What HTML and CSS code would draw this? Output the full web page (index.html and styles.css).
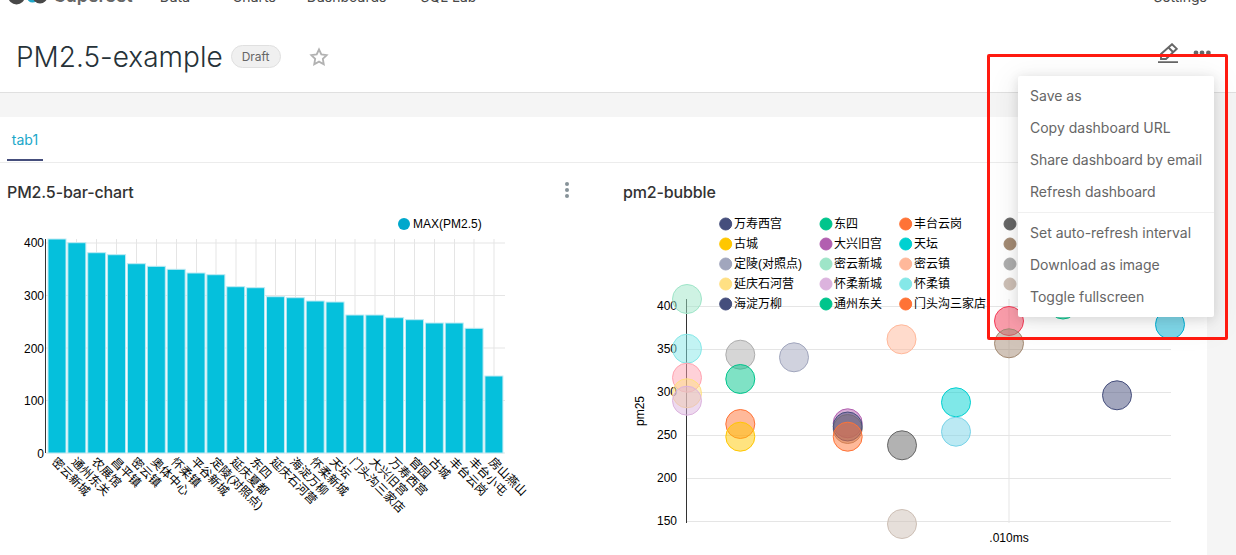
FILE: index.html
```html
<!DOCTYPE html>
<html lang="en">
<head>
  <meta charset="UTF-8">
  <meta name="viewport" content="width=device-width, initial-scale=1.0">
  <title>PM2.5-example</title>
  <link rel="stylesheet" href="styles.css">
</head>
<body>
  <nav class="top-nav">
    <svg class="logo" viewBox="0 0 39 6" width="39" height="6">
      <circle class="logo-dark" cx="8.5" cy="-4" r="8.5"/>
      <circle class="logo-teal" cx="24.5" cy="-3" r="5.5"/>
      <circle class="logo-dark" cx="32" cy="-4" r="7.5"/>
    </svg>
    <span class="brand">Superset</span>
    <div class="nav-links">
      <a class="nav-link nav-link-first">Data</a>
      <a class="nav-link nav-link-charts">Charts</a>
      <a class="nav-link">Dashboards</a>
      <a class="nav-link">SQL Lab</a>
    </div>
    <div class="nav-right">
      <svg class="nav-plus" viewBox="0 0 4 2" width="4" height="2"><rect class="logo-teal" x="1" y="0" width="2" height="2"/></svg>
      <a class="nav-link">Settings</a>
    </div>
  </nav>

  <header class="dash-header">
    <div class="title-group">
      <h1 class="dash-title">PM2.5-example</h1>
      <span class="draft-badge">Draft</span>
      <svg class="star" viewBox="0 0 24 24" width="20" height="20">
        <polygon points="12 3 14.8 8.9 21.2 9.8 16.6 14.3 17.7 20.7 12 17.6 6.3 20.7 7.4 14.3 2.8 9.8 9.2 8.9"/>
      </svg>
    </div>
    <div class="actions">
      <svg class="pencil" viewBox="0 0 20 20" width="20" height="20">
        <path d="M14 1.2 L18.8 5.8 L8 16 H3 V11 Z"/>
        <path d="M10.5 4.5 L15 9"/>
        <path d="M0 19.2 H20"/>
      </svg>
      <svg class="more" viewBox="0 0 18 6" width="18" height="6">
        <circle cx="3" cy="3" r="2.4"/>
        <circle cx="9" cy="3" r="2.4"/>
        <circle cx="15.4" cy="3" r="2.4"/>
      </svg>
    </div>
  </header>

  <div class="band"></div>

  <main class="dash-content">
    <div class="tabs">
      <a class="tab">tab1</a>
    </div>
    <div class="chart-row">
      <section class="chart-card chart-left">
        <div class="chart-head">
          <h2 class="chart-title">PM2.5-bar-chart</h2>
          <svg class="kebab" viewBox="0 0 6 16" width="6" height="16">
            <circle cx="3" cy="2" r="2"/>
            <circle cx="3" cy="8" r="2"/>
            <circle cx="3" cy="14" r="2"/>
          </svg>
        </div>
        <svg class="chart" viewBox="0 205 615 350" width="615" height="350">
          <!-- legend -->
          <circle class="legend-max" cx="404" cy="224" r="6"/>
          <text class="tick" x="413" y="228">MAX(PM2.5)</text>

          <!-- grid -->
          <path class="grid" d="M46 243H505M46 295.5H505M46 348H505M46 400.5H505M46 453H505"/>
          <path class="grid" d="M76.5 239V453M96.5 239V453M116.5 239V453M136.5 239V453M156.5 239V453M176.5 239V453M196.5 239V453M216 239V453M236 239V453M256 239V453M275.5 239V453M295.5 239V453M315.5 239V453M335.5 239V453M355 239V453M375 239V453M394.5 239V453M414.5 239V453M434.5 239V453M454.5 239V453M474 239V453M494 239V453"/>
          <path class="axis" d="M45.5 239V453"/>
          <text class="tick tick-end" x="44" y="247">400</text>
          <text class="tick tick-end" x="44" y="300">300</text>
          <text class="tick tick-end" x="44" y="353">200</text>
          <text class="tick tick-end" x="44" y="405">100</text>
          <text class="tick tick-end" x="44" y="458">0</text>

          <!-- bars -->
          <rect class="bar" x="48" y="239" width="18" height="214"/>
          <rect class="bar" x="67.86" y="242.7" width="18" height="210.3"/>
          <rect class="bar" x="87.72" y="252.7" width="18" height="200.3"/>
          <rect class="bar" x="107.58" y="254.7" width="18" height="198.3"/>
          <rect class="bar" x="127.44" y="263.7" width="18" height="189.3"/>
          <rect class="bar" x="147.3" y="266.3" width="18" height="186.7"/>
          <rect class="bar" x="167.16" y="269.3" width="18" height="183.7"/>
          <rect class="bar" x="187.02" y="273" width="18" height="180"/>
          <rect class="bar" x="206.88" y="274.7" width="18" height="178.3"/>
          <rect class="bar" x="226.74" y="286.7" width="18" height="166.3"/>
          <rect class="bar" x="246.6" y="287.7" width="18" height="165.3"/>
          <rect class="bar" x="266.46" y="296.7" width="18" height="156.3"/>
          <rect class="bar" x="286.32" y="297.7" width="18" height="155.3"/>
          <rect class="bar" x="306.18" y="301" width="18" height="152"/>
          <rect class="bar" x="326.04" y="302" width="18" height="151"/>
          <rect class="bar" x="345.9" y="315" width="18" height="138"/>
          <rect class="bar" x="365.76" y="315" width="18" height="138"/>
          <rect class="bar" x="385.62" y="317.7" width="18" height="135.3"/>
          <rect class="bar" x="405.48" y="319.7" width="18" height="133.3"/>
          <rect class="bar" x="425.34" y="323" width="18" height="130"/>
          <rect class="bar" x="445.2" y="323" width="18" height="130"/>
          <rect class="bar" x="465.06" y="328.3" width="18" height="124.7"/>
          <rect class="bar" x="484.92" y="376" width="18" height="77"/>

          <!-- x labels -->
          <text class="tick" transform="translate(51 462.5) rotate(45)">密云新城</text>
          <text class="tick" transform="translate(70.86 462.5) rotate(45)">通州东关</text>
          <text class="tick" transform="translate(90.72 462.5) rotate(45)">农展馆</text>
          <text class="tick" transform="translate(110.58 462.5) rotate(45)">昌平镇</text>
          <text class="tick" transform="translate(130.44 462.5) rotate(45)">密云镇</text>
          <text class="tick" transform="translate(150.3 462.5) rotate(45)">奥体中心</text>
          <text class="tick" transform="translate(170.16 462.5) rotate(45)">怀柔镇</text>
          <text class="tick" transform="translate(190.02 462.5) rotate(45)">平谷新城</text>
          <text class="tick" transform="translate(209.88 462.5) rotate(45)">定陵(对照点)</text>
          <text class="tick" transform="translate(229.74 462.5) rotate(45)">延庆夏都</text>
          <text class="tick" transform="translate(249.6 462.5) rotate(45)">东四</text>
          <text class="tick" transform="translate(269.46 462.5) rotate(45)">延庆石河营</text>
          <text class="tick" transform="translate(289.32 462.5) rotate(45)">海淀万柳</text>
          <text class="tick" transform="translate(309.18 462.5) rotate(45)">怀柔新城</text>
          <text class="tick" transform="translate(329.04 462.5) rotate(45)">天坛</text>
          <text class="tick" transform="translate(348.9 462.5) rotate(45)">门头沟三家店</text>
          <text class="tick" transform="translate(368.76 462.5) rotate(45)">大兴旧宫</text>
          <text class="tick" transform="translate(388.62 462.5) rotate(45)">万寿西宫</text>
          <text class="tick" transform="translate(408.48 462.5) rotate(45)">官园</text>
          <text class="tick" transform="translate(428.34 462.5) rotate(45)">古城</text>
          <text class="tick" transform="translate(448.2 462.5) rotate(45)">丰台云岗</text>
          <text class="tick" transform="translate(468.06 462.5) rotate(45)">丰台小屯</text>
          <text class="tick" transform="translate(487.92 462.5) rotate(45)">房山燕山</text>
        </svg>
      </section>

      <section class="chart-card chart-right">
        <div class="chart-head">
          <h2 class="chart-title">pm2-bubble</h2>
        </div>
        <svg class="chart" viewBox="615 205 592 350" width="592" height="350">
          <!-- grid -->
          <path class="grid" d="M686 306.5H1171M686 349.5H1171M686 392.5H1171M686 435.5H1171M686 478.5H1171M686 521.5H1171"/>
          <path class="grid" d="M1009 299V523"/>
          <path class="axis" d="M686.5 299V523"/>
          <text class="tick tick-end" x="677" y="310">400</text>
          <text class="tick tick-end" x="677" y="353">350</text>
          <text class="tick tick-end" x="677" y="396">300</text>
          <text class="tick tick-end" x="677" y="439">250</text>
          <text class="tick tick-end" x="677" y="482">200</text>
          <text class="tick tick-end" x="677" y="525">150</text>
          <text class="tick tick-mid" x="1009" y="542">.010ms</text>
          <text class="tick tick-mid" transform="translate(644 411) rotate(-90)">pm25</text>

          <!-- legend -->
          <circle class="c-navy" cx="725.7" cy="224" r="6"/>
          <text class="tick" x="734" y="228">万寿西宫</text>
          <circle class="c-gold" cx="725.7" cy="244" r="6"/>
          <text class="tick" x="734" y="248">古城</text>
          <circle class="c-navy-light" cx="725.7" cy="264" r="6"/>
          <text class="tick" x="734" y="268">定陵(对照点)</text>
          <circle class="c-gold-light" cx="725.7" cy="284" r="6"/>
          <text class="tick" x="734" y="288">延庆石河营</text>
          <circle class="c-navy" cx="725.7" cy="304" r="6"/>
          <text class="tick" x="734" y="308">海淀万柳</text>

          <circle class="c-green" cx="826" cy="224" r="6"/>
          <text class="tick" x="834" y="228">东四</text>
          <circle class="c-purple" cx="826" cy="244" r="6"/>
          <text class="tick" x="834" y="248">大兴旧宫</text>
          <circle class="c-green-light" cx="826" cy="264" r="6"/>
          <text class="tick" x="834" y="268">密云新城</text>
          <circle class="c-purple-light" cx="826" cy="284" r="6"/>
          <text class="tick" x="834" y="288">怀柔新城</text>
          <circle class="c-green" cx="826" cy="304" r="6"/>
          <text class="tick" x="834" y="308">通州东关</text>

          <circle class="c-orange" cx="905.7" cy="224" r="6"/>
          <text class="tick" x="914" y="228">丰台云岗</text>
          <circle class="c-teal" cx="905.7" cy="244" r="6"/>
          <text class="tick" x="914" y="248">天坛</text>
          <circle class="c-orange-light" cx="905.7" cy="264" r="6"/>
          <text class="tick" x="914" y="268">密云镇</text>
          <circle class="c-teal-light" cx="905.7" cy="284" r="6"/>
          <text class="tick" x="914" y="288">怀柔镇</text>
          <circle class="c-orange" cx="905.7" cy="304" r="6"/>
          <text class="tick" x="914" y="308">门头沟三家店</text>

          <circle class="c-gray" cx="1010" cy="224" r="6"/>
          <circle class="c-brown" cx="1010" cy="244" r="6"/>
          <circle class="c-gray-light" cx="1010" cy="264" r="6"/>
          <circle class="c-beige" cx="1010" cy="284" r="6"/>

          <!-- bubbles -->
          <circle class="bubble c-green-light" cx="687" cy="299" r="14.5"/>
          <circle class="bubble c-teal-light" cx="687" cy="348.7" r="14.5"/>
          <circle class="bubble c-pink" cx="687" cy="377.7" r="14.5"/>
          <circle class="bubble c-gold-light" cx="687" cy="393.3" r="14.5"/>
          <circle class="bubble c-purple-light" cx="687" cy="400.7" r="14.5"/>
          <circle class="bubble c-gray-light" cx="740.3" cy="354.7" r="14.5"/>
          <circle class="bubble c-green" cx="740.3" cy="379" r="14.5"/>
          <circle class="bubble c-navy-light" cx="794" cy="357.3" r="14.5"/>
          <circle class="bubble c-orange" cx="740.3" cy="424" r="14.5"/>
          <circle class="bubble c-gold" cx="740.3" cy="436.7" r="14.5"/>
          <circle class="bubble c-purple" cx="847.7" cy="423.3" r="14.5"/>
          <circle class="bubble c-brown" cx="847.7" cy="429" r="14.5"/>
          <circle class="bubble c-navy" cx="847.7" cy="426.5" r="14.5"/>
          <circle class="bubble c-orange" cx="847.7" cy="436.7" r="14.5"/>
          <circle class="bubble c-gray" cx="902" cy="445.3" r="14.5"/>
          <circle class="bubble c-beige" cx="902" cy="524" r="14.5"/>
          <circle class="bubble c-orange-light" cx="901.5" cy="339.3" r="14.5"/>
          <circle class="bubble c-teal" cx="956" cy="402.3" r="14.5"/>
          <circle class="bubble c-sky" cx="956" cy="431.7" r="14.5"/>
          <circle class="bubble c-navy" cx="1117" cy="395.3" r="14.5"/>
          <circle class="bubble c-red" cx="1009" cy="321" r="14.5"/>
          <circle class="bubble c-brown" cx="1009" cy="343.3" r="14.5"/>
          <circle class="bubble c-green" cx="1063" cy="304.5" r="14.5"/>
          <circle class="bubble c-cyan" cx="1170" cy="324.5" r="14.5"/>
        </svg>
      </section>
    </div>
  </main>

  <ul class="dash-menu">
    <li class="menu-item">Save as</li>
    <li class="menu-item">Copy dashboard URL</li>
    <li class="menu-item">Share dashboard by email</li>
    <li class="menu-item">Refresh dashboard</li>
    <li class="menu-divider"></li>
    <li class="menu-item">Set auto-refresh interval</li>
    <li class="menu-item">Download as image</li>
    <li class="menu-item">Toggle fullscreen</li>
  </ul>

  <div class="red-box"></div>
</body>
</html>
```

FILE: styles.css
```css
html, body {
  height: 555px;
  overflow: hidden;
}
body {
  position: relative;
  margin: 0;
  background-color: #f5f5f5;
  font-family: Inter, "Noto Sans CJK SC", sans-serif;
  color: #484848;
}

/* top nav, scrolled almost out of the window */
.top-nav {
  display: flex;
  align-items: flex-end;
  height: 5px;
  overflow: hidden;
  background-color: #fff;
  padding: 0 29px 0 8px;
}
.logo {
  flex: none;
  align-self: flex-start;
}
.logo-dark {
  fill: #484848;
}
.logo-teal {
  fill: #20a7c9;
}
.brand {
  margin-left: 7px;
  font-size: 18px;
  font-weight: 600;
  line-height: 18px;
  color: #666;
}
.nav-links {
  display: flex;
  gap: 34px;
  margin-left: 27px;
}
.nav-link {
  font-size: 14px;
  line-height: 14px;
  color: #484848;
  margin-bottom: 1px;
}
.nav-link-first {
  margin-right: 8px;
}
.nav-link-charts {
  margin-right: -3px;
}
.nav-right {
  display: flex;
  align-items: flex-start;
  gap: 45px;
  margin-left: auto;
}
.nav-plus {
  align-self: flex-start;
}

/* dashboard header */
.dash-header {
  display: flex;
  align-items: center;
  justify-content: space-between;
  height: 71px;
  padding: 16px 25px 0 16px;
  background-color: #fff;
  border-bottom: 1px solid #e0e0e0;
}
.title-group {
  display: flex;
  align-items: center;
}
.dash-title {
  margin: 0;
  font-size: 28px;
  font-weight: 300;
  line-height: 36px;
  color: #263238;
}
.draft-badge {
  margin-left: 8px;
  padding: 0 10px;
  height: 21px;
  line-height: 21px;
  font-size: 12px;
  color: #666;
  background-color: #f0f0f0;
  border: 1px solid #e0e0e0;
  border-radius: 12px;
}
.star {
  margin-left: 28px;
}
.star polygon {
  fill: none;
  stroke: #b2b2b2;
  stroke-width: 2.2;
}
.actions {
  display: flex;
  align-items: center;
  gap: 15px;
}
.pencil {
  margin-top: -8px;
}
.pencil path {
  fill: none;
  stroke: #666;
  stroke-width: 1.9;
}
.more {
  margin-top: -7px;
}
.more circle {
  fill: #666;
}

.band {
  height: 24px;
}

/* content */
.dash-content {
  width: 1207px;
  height: 438px;
  background-color: #fff;
}
.tabs {
  display: flex;
  height: 45px;
  padding-left: 7px;
  border-bottom: 1px solid #ececec;
}
.tab {
  width: 36px;
  height: 44px;
  padding-top: 14px;
  box-sizing: border-box;
  border-bottom: 2px solid #454e7c;
  text-align: center;
  font-size: 14px;
  line-height: 18px;
  color: #20a7c9;
}
.chart-row {
  display: flex;
}
.chart-card {
  flex: none;
}
.chart-left {
  width: 615px;
}
.chart-right {
  width: 592px;
}
.chart-head {
  display: flex;
  align-items: center;
  justify-content: space-between;
  height: 20px;
  padding: 19px 45px 3px 7px;
}
.chart-right .chart-head {
  padding-left: 8px;
}
.chart-title {
  margin: 0;
  font-size: 16px;
  font-weight: 500;
  line-height: 20px;
  letter-spacing: -0.13px;
  color: #323232;
}
.kebab {
  margin-top: -5px;
}
.kebab circle {
  fill: #879399;
}
.chart {
  display: block;
}

/* chart parts */
.tick {
  font-family: "Liberation Sans", "Noto Sans CJK SC", sans-serif;
  font-size: 12px;
  fill: #000;
}
.tick-end {
  text-anchor: end;
}
.tick-mid {
  text-anchor: middle;
}
.grid {
  fill: none;
  stroke: #e5e5e5;
  stroke-width: 1;
}
.axis {
  fill: none;
  stroke: #333;
  stroke-width: 1;
}
.bar {
  fill: #00bfdb;
  stroke: #bfeaf3;
  stroke-width: 1;
  fill-opacity: 0.98;
}
.legend-max {
  fill: #00a8cc;
}
.bubble {
  fill-opacity: 0.5;
  stroke-width: 1;
}
.c-navy { fill: #454e7c; stroke: #454e7c; }
.c-gold { fill: #ffc700; stroke: #ffc700; }
.c-navy-light { fill: #a1a6bd; stroke: #a1a6bd; }
.c-gold-light { fill: #ffe083; stroke: #ffe083; }
.c-green { fill: #00c58c; stroke: #00c58c; }
.c-purple { fill: #b25fb0; stroke: #b25fb0; }
.c-green-light { fill: #9ee5c8; stroke: #9ee5c8; }
.c-purple-light { fill: #dcb3de; stroke: #dcb3de; }
.c-orange { fill: #ff7336; stroke: #ff7336; }
.c-teal { fill: #00d1d1; stroke: #00d1d1; }
.c-orange-light { fill: #ffb89a; stroke: #ffb89a; }
.c-teal-light { fill: #85e8e8; stroke: #85e8e8; }
.c-gray { fill: #666; stroke: #666; }
.c-brown { fill: #a38a73; stroke: #a38a73; }
.c-gray-light { fill: #adadad; stroke: #adadad; }
.c-beige { fill: #cdbfb5; stroke: #cdbfb5; }
.c-pink { fill: #ffa3b1; stroke: #ffa3b1; }
.c-sky { fill: #78d3e8; stroke: #78d3e8; }
.c-red { fill: #f53b57; stroke: #f53b57; }
.c-cyan { fill: #00b2d6; stroke: #00b2d6; }

/* overlays */
.dash-menu {
  position: absolute;
  left: 1018px;
  top: 76px;
  width: 196px;
  margin: 0;
  padding: 4px 0;
  box-sizing: border-box;
  list-style: none;
  background-color: #fff;
  border-radius: 2px;
  box-shadow: 0 2px 12px rgba(0, 0, 0, 0.12), 0 6px 30px 6px rgba(0, 0, 0, 0.06);
}
.menu-item {
  height: 32px;
  padding-left: 12px;
  font-size: 14px;
  line-height: 32px;
  color: #666;
  white-space: nowrap;
}
.menu-divider {
  height: 1px;
  margin: 4px 0;
  background-color: #f0f0f0;
}
.red-box {
  position: absolute;
  left: 987px;
  top: 54px;
  width: 235px;
  height: 280px;
  border: 3px solid #ff1a10;
  border-radius: 2px;
}
```
